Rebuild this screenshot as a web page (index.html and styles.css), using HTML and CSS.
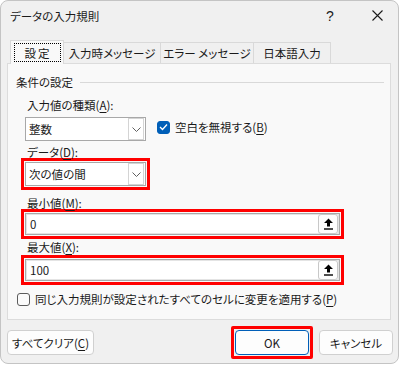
FILE: index.html
```html
<!DOCTYPE html>
<html lang="ja">
<head>
  <meta charset="UTF-8" />
  <title>データの入力規則</title>
  <link rel="stylesheet" href="styles.css">
</head>
<body>
  <div class="window">
    <div class="titlebar">
      <span class="title">データの入力規則</span>
      <span class="tb-help">?</span>
      <span class="tb-close">
        <svg width="11" height="11" viewBox="0 0 11 11"><path d="M0.5 0.5 L10.5 10.5 M10.5 0.5 L0.5 10.5" stroke="#1a1a1a" stroke-width="1.1" fill="none"/></svg>
      </span>
    </div>

    <div class="tabs">
      <div class="tab active"><span class="focus">設定</span></div>
      <div class="tab t2">入力時メッセージ</div>
      <div class="tab t3">エラー メッセージ</div>
      <div class="tab t4">日本語入力</div>
    </div>

    <div class="panel">
      <div class="group-title"><span>条件の設定</span><i class="rule"></i></div>

      <div class="label lbl-type">入力値の種類(<u>A</u>):</div>
      <div class="row">
        <div class="combo plain">
          <span class="value">整数</span>
          <span class="drop"><svg width="9" height="5" viewBox="0 0 9 5"><path d="M0.5 0.5 L4.5 4.5 L8.5 0.5" stroke="#606060" fill="none"/></svg></span>
        </div>
        <div class="check checked-row">
          <span class="box on"><svg width="9" height="8" viewBox="0 0 9 8"><path d="M1 4 L3.5 6.5 L8 1.5" stroke="#fff" stroke-width="1.3" fill="none"/></svg></span>
          <span>空白を無視する(<u>B</u>)</span>
        </div>
      </div>

      <div class="label lbl-data">データ(<u>D</u>):</div>
      <div class="hl hl-combo">
        <div class="combo">
          <span class="value">次の値の間</span>
          <span class="drop"><svg width="9" height="5" viewBox="0 0 9 5"><path d="M0.5 0.5 L4.5 4.5 L8.5 0.5" stroke="#606060" fill="none"/></svg></span>
        </div>
      </div>

      <div class="label lbl-min">最小値(<u>M</u>):</div>
      <div class="hl hl-field">
        <div class="field">
          <span class="value">0</span>
          <span class="ref"><svg width="11" height="12" viewBox="0 0 11 12"><path d="M5.5 0.5 L10 5 L7 5 L7 8.5 L4 8.5 L4 5 L1 5 Z" fill="#000"/><rect x="1" y="10.3" width="9" height="1.4" fill="#000"/></svg></span>
        </div>
      </div>

      <div class="label lbl-max">最大値(<u>X</u>):</div>
      <div class="hl hl-field hl-max">
        <div class="field">
          <span class="value">100</span>
          <span class="ref"><svg width="11" height="12" viewBox="0 0 11 12"><path d="M5.5 0.5 L10 5 L7 5 L7 8.5 L4 8.5 L4 5 L1 5 Z" fill="#000"/><rect x="1" y="10.3" width="9" height="1.4" fill="#000"/></svg></span>
        </div>
      </div>

      <div class="check apply">
        <span class="box"></span>
        <span>同じ入力規則が設定されたすべてのセルに変更を適用する(<u>P</u>)</span>
      </div>
    </div>

    <div class="footer">
      <button class="btn clear">すべてクリア(<u>C</u>)</button>
      <div class="hl hl-ok"><button class="btn ok">OK</button></div>
      <button class="btn cancel">キャンセル</button>
    </div>
  </div>
</body>
</html>
```

FILE: styles.css
```css
* {
  box-sizing: border-box;
}
body {
  margin: 0;
  background: #ffffff;
  font-family: "Noto Sans CJK JP", sans-serif;
  font-size: 11.5px;
  font-feature-settings: "palt";
  color: #1a1a1a;
}
u {
  text-underline-offset: 2px;
}
.window {
  width: 399px;
  height: 364px;
  border: 1px solid #c4c4c4;
  border-radius: 8px;
  background: #f0f0f0;
  overflow: hidden;
}
.titlebar {
  height: 29px;
  display: flex;
  align-items: center;
  padding-left: 9px;
}
.title {
  flex: 1;
}
.tb-help {
  width: 12px;
  text-align: center;
  margin-right: 36px;
  font-family: "Liberation Sans", sans-serif;
  font-size: 14px;
}
.tb-close {
  width: 11px;
  margin-right: 15px;
  display: flex;
}

.tabs {
  display: flex;
  align-items: flex-end;
  margin: 10px 0 0 9px;
  height: 23px;
}
.tab {
  height: 21px;
  display: flex;
  align-items: center;
  justify-content: center;
  border: 1px solid #d9d9d9;
  border-bottom: none;
  border-left: none;
  background: #f0f0f0;
  white-space: nowrap;
}
.tab.active {
  width: 54px;
  height: 24px;
  border-left: 1px solid #d9d9d9;
  background: #f9f9f9;
  position: relative;
  z-index: 1;
  margin-bottom: -1px;
}
.focus {
  display: flex;
  align-items: center;
  justify-content: center;
  width: 47px;
  height: 19px;
  border: 1px dotted #000;
  letter-spacing: 2px;
  padding-left: 2px;
}
.t2 { width: 97px; }
.t3 { width: 93px; }
.t4 { width: 77px; }

.panel {
  margin-left: 6px;
  width: 384px;
  height: 257px;
  background: #f9f9f9;
  border: 1px solid #dcdcdc;
  padding: 10px 0 0 8px;
}
.group-title {
  display: flex;
  align-items: center;
  height: 16px;
}
.rule {
  flex: 1;
  height: 1px;
  background: #d9d9d9;
  margin: 1px 6px 0 7px;
}
.label {
  height: 14px;
  line-height: 14px;
  margin-left: 11px;
}
.lbl-type { margin-top: 8px; }
.lbl-data { margin-top: 4px; }
.lbl-min { margin-top: 6px; }
.lbl-max { margin-top: 1px; }

.row {
  display: flex;
  align-items: center;
  margin-top: 5px;
}
.combo {
  width: 121px;
  height: 24px;
  background: #fff;
  border: 1px solid #a8a8a8;
  display: flex;
  align-items: center;
  padding: 0 1px 0 3px;
}
.combo.plain {
  margin-left: 9px;
}
.combo .value {
  flex: 1;
}
.drop {
  width: 16px;
  height: 22px;
  border: 1px solid #d4d4d4;
  display: flex;
  align-items: center;
  justify-content: center;
  background: #fff;
}
.check {
  display: flex;
  align-items: center;
  gap: 5px;
}
.checked-row {
  margin-left: 11px;
  margin-bottom: 4px;
}
.box {
  width: 13px;
  height: 13px;
  border: 1px solid #5c5c5c;
  border-radius: 3px;
  background: #fbfbfb;
  display: flex;
  align-items: center;
  justify-content: center;
}
.box.on {
  background: #005fb8;
  border-color: #005fb8;
}

.hl {
  border: 3px solid #ff0000;
  padding: 1px;
  width: max-content;
}
.hl-combo,
.hl-field {
  margin-left: 5px;
  margin-top: -1px;
}
.hl-max {
  margin-top: 1px;
}
.field {
  width: 315px;
  height: 22px;
  background: #fff;
  border: 1px solid #a8a8a8;
  box-shadow: inset 0 0 0 1px #e4e4e4;
  display: flex;
  align-items: center;
  padding: 0 1px 0 4px;
}
.field .value {
  flex: 1;
}
.ref {
  width: 20px;
  height: 20px;
  border: 1px solid #c8c8c8;
  border-radius: 3px;
  background: #fdfdfd;
  display: flex;
  align-items: center;
  justify-content: center;
}
.apply {
  margin-top: 6px;
  margin-left: 1px;
}

.footer {
  display: flex;
  align-items: center;
  margin-top: 6px;
  padding: 0 5px 0 6px;
}
.btn {
  height: 25px;
  font-family: inherit;
  font-size: 11.5px;
  font-feature-settings: "palt";
  color: #1a1a1a;
  background: #fdfdfd;
  border: 1px solid #d0d0d0;
  border-radius: 4px;
  padding: 0;
}
.clear {
  width: 87px;
}
.hl-ok {
  margin-left: auto;
  border-radius: 2px;
}
.ok {
  width: 74px;
  display: block;
  border-color: #005fb8;
}
.cancel {
  width: 74px;
  margin-left: 6px;
}
```
